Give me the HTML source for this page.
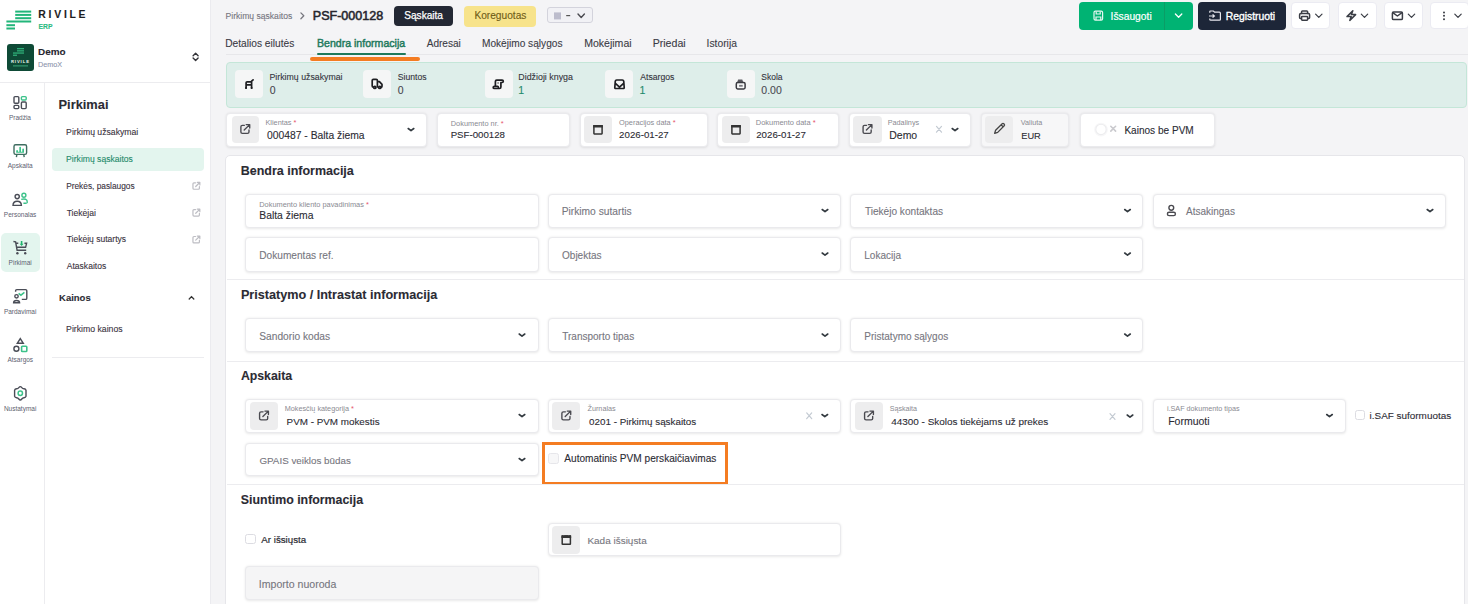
<!DOCTYPE html>
<html><head><meta charset="utf-8"><style>
*{box-sizing:border-box;margin:0;padding:0}
html,body{width:1468px;height:604px;overflow:hidden;background:#f4f4f6;font-family:"Liberation Sans",sans-serif}
.a{position:absolute}
.t{position:absolute;white-space:nowrap;line-height:1;-webkit-text-stroke:0.1px currentColor}
svg{display:block}
.card{position:absolute;background:#fff;border:1px solid #eaeaed;border-radius:4px;box-shadow:0 0.8px 2.5px rgba(0,0,0,0.09)}
.ibox{position:absolute;background:#ededee;border-radius:4px}
.hbtn{position:absolute;top:2px;width:39px;height:27px;background:#fff;border:1px solid #ebebf2;border-radius:4px}
.sbox{position:absolute;top:70px;width:28px;height:28px;background:#f5f6f6;border-radius:4px}
.cb{position:absolute;width:11px;height:11px;border:1px solid #dcdce2;border-radius:2.5px;background:#fff}
</style></head><body>
<div class="a" style="left:0px;top:0px;width:211px;height:604px;background:#fff;border-right:1px solid #ebebef"></div>
<div class="a" style="left:0px;top:82px;width:211px;height:1px;background:#ececef;"></div>
<div class="a" style="left:44px;top:83px;width:1px;height:521px;background:#ececef;"></div>
<svg class="a" style="left:0;top:0" width="40" height="34" viewBox="0 0 40 34"><g fill="#22b67a">
<rect x="15.2" y="10.6" width="16" height="2"/><rect x="15.2" y="13.9" width="16" height="2"/><rect x="15.2" y="17.2" width="16" height="2"/>
<rect x="6.4" y="20.5" width="24.8" height="2"/><rect x="6.4" y="24.2" width="8.6" height="2"/><rect x="6.4" y="27.5" width="8.6" height="2"/></g></svg>
<div class="t" style="left:38.32px;top:9.71px;font-size:10.40px;font-weight:bold;letter-spacing:2.75px;color:#1d1d22;">RIVILE</div>
<div class="t" style="left:38.56px;top:24.37px;font-size:6.79px;font-weight:bold;color:#2dbb83;">ERP</div>
<div class="a" style="left:7px;top:44.4px;width:26.5px;height:26.5px;background:#0e4a36;border-radius:3px"></div>
<svg class="a" style="left:7px;top:44.4px" width="27" height="27" viewBox="0 0 27 27"><g fill="#2fae78">
<rect x="10" y="4" width="7" height="1.3"/><rect x="10" y="6.2" width="7" height="1.3"/><rect x="6" y="8.4" width="11" height="1.3"/><rect x="6" y="10.6" width="4" height="1.3"/></g>
<text x="13.4" y="19.4" font-family="Liberation Sans" font-weight="bold" font-size="4.2" letter-spacing="0.9" fill="#e9f3ee" text-anchor="middle">RIVILE</text>
<rect x="6" y="21.4" width="15" height="1" fill="#3aa87a"/></svg>
<div class="t" style="left:38.05px;top:47.00px;font-size:9.94px;font-weight:bold;color:#26262e;">Demo</div>
<div class="t" style="left:38.12px;top:60.69px;font-size:7.23px;color:#8a92ab;">DemoX</div>
<div class="a" style="left:1.2px;top:233.4px;width:38.7px;height:38.2px;background:#e3f5ee;border-radius:5px"></div>
<div class="t" style="left:8.91px;top:115.01px;font-size:6.50px;color:#5d6170;-webkit-text-stroke:0">Pradžia</div>
<div class="t" style="left:7.73px;top:162.58px;font-size:6.50px;color:#5d6170;-webkit-text-stroke:0">Apskaita</div>
<div class="t" style="left:3.80px;top:212.15px;font-size:6.50px;color:#5d6170;-webkit-text-stroke:0">Personalas</div>
<div class="t" style="left:8.61px;top:259.72px;font-size:6.50px;color:#5d6170;-webkit-text-stroke:0">Pirkimai</div>
<div class="t" style="left:3.90px;top:309.29px;font-size:6.50px;color:#5d6170;-webkit-text-stroke:0">Pardavimai</div>
<div class="t" style="left:7.48px;top:356.86px;font-size:6.50px;color:#5d6170;-webkit-text-stroke:0">Atsargos</div>
<div class="t" style="left:3.90px;top:406.43px;font-size:6.50px;color:#5d6170;-webkit-text-stroke:0">Nustatymai</div>
<div class="t" style="left:58.57px;top:98.95px;font-size:12.84px;font-weight:bold;color:#2b2b33;">Pirkimai</div>
<div class="a" style="left:52px;top:147.5px;width:152.2px;height:23.2px;background:#e3f5ee;border-radius:4px"></div>
<div class="t" style="left:66.11px;top:127.77px;font-size:8.67px;color:#3a3340;">Pirkimų užsakymai</div>
<div class="t" style="left:66.11px;top:154.95px;font-size:8.58px;color:#1f8a6a;">Pirkimų sąskaitos</div>
<div class="t" style="left:66.13px;top:181.86px;font-size:8.33px;color:#3a3340;">Prekės, paslaugos</div>
<div class="t" style="left:66.63px;top:209.25px;font-size:8.58px;color:#3a3340;">Tiekėjai</div>
<div class="t" style="left:66.63px;top:234.99px;font-size:8.54px;color:#3a3340;">Tiekėjų sutartys</div>
<div class="t" style="left:66.80px;top:261.68px;font-size:8.54px;color:#3a3340;">Ataskaitos</div>
<div class="t" style="left:59.08px;top:293.19px;font-size:9.47px;font-weight:bold;color:#2b2b33;">Kainos</div>
<div class="t" style="left:66.10px;top:324.54px;font-size:8.70px;color:#3a3340;">Pirkimo kainos</div>
<div class="a" style="left:52px;top:356.5px;width:152px;height:1px;background:#ececef;"></div>
<div class="t" style="left:225.51px;top:12.05px;font-size:8.58px;color:#74747e;">Pirkimų sąskaitos</div>
<div class="t" style="left:312.79px;top:10.38px;font-size:12.56px;color:#26262e;-webkit-text-stroke:0.55px #26262e">PSF-000128</div>
<div class="a" style="left:394px;top:6px;width:59px;height:20px;background:#232834;border-radius:4px"></div>
<div class="t" style="left:404.25px;top:10.77px;font-size:10.10px;color:#fff;-webkit-text-stroke:0.25px #fff">Sąskaita</div>
<div class="a" style="left:464.3px;top:6px;width:72.2px;height:20.5px;background:#f7e38b;border-radius:4px"></div>
<div class="t" style="left:474.39px;top:10.70px;font-size:10.18px;color:#6e5b16;">Koreguotas</div>
<div class="a" style="left:547.4px;top:7.2px;width:46px;height:16.2px;border:1px solid #d3d3dc;border-radius:3px;background:#f1f1f5"></div>
<div class="t" style="left:225.18px;top:38.98px;font-size:10.20px;color:#3b3b45;">Detalios eilutės</div>
<div class="t" style="left:316.95px;top:37.65px;font-size:10.59px;color:#1f7a5c;-webkit-text-stroke:0.45px #1f7a5c">Bendra informacija</div>
<div class="t" style="left:426.70px;top:39.08px;font-size:10.08px;color:#3b3b45;">Adresai</div>
<div class="t" style="left:481.99px;top:39.02px;font-size:10.15px;color:#3b3b45;">Mokėjimo sąlygos</div>
<div class="t" style="left:584.15px;top:37.67px;font-size:10.56px;color:#3b3b45;">Mokėjimai</div>
<div class="t" style="left:652.65px;top:37.62px;font-size:10.62px;color:#3b3b45;">Priedai</div>
<div class="t" style="left:706.57px;top:38.88px;font-size:10.32px;color:#3b3b45;">Istorija</div>
<div class="a" style="left:226px;top:54px;width:1242px;height:1px;background:#e7e7ea;"></div>
<div class="a" style="left:317px;top:53px;width:89px;height:2px;background:#1f7a5c;border-radius:1px"></div>
<div class="a" style="left:310px;top:56.8px;width:110px;height:4px;background:#f47c22;border-radius:2px"></div>
<div class="a" style="left:1078.7px;top:1.5px;width:114px;height:28.2px;background:#00b373;border-radius:4px"></div>
<div class="a" style="left:1164px;top:1.5px;width:1px;height:28.2px;background:#0b9d66;"></div>
<div class="t" style="left:1110.58px;top:12.02px;font-size:10.27px;color:#fff;-webkit-text-stroke:0.2px #fff">Išsaugoti</div>
<div class="a" style="left:1197.7px;top:1.5px;width:88px;height:28.2px;background:#1d2638;border-radius:4px"></div>
<div class="t" style="left:1225.77px;top:11.96px;font-size:10.34px;color:#fff;-webkit-text-stroke:0.35px #fff">Registruoti</div>
<div class="hbtn" style="left:1291px"></div>
<div class="hbtn" style="left:1337.6px"></div>
<div class="hbtn" style="left:1383.6px"></div>
<div class="hbtn" style="left:1430.2px"></div>
<div class="a" style="left:225.5px;top:62px;width:1241px;height:46px;background:#deeeea;border:1px solid #c4e6d8;border-radius:4px"></div>
<div class="sbox" style="left:235.3px"></div>
<div class="t" style="left:269.50px;top:73.39px;font-size:8.77px;color:#34343c;">Pirkimų užsakymai</div>
<div class="t" style="left:269.81px;top:84.63px;font-size:10.50px;color:#44444c;">0</div>
<div class="sbox" style="left:363px"></div>
<div class="t" style="left:397.71px;top:73.48px;font-size:8.66px;color:#34343c;">Siuntos</div>
<div class="t" style="left:397.71px;top:84.63px;font-size:10.50px;color:#44444c;">0</div>
<div class="sbox" style="left:484.6px"></div>
<div class="t" style="left:518.29px;top:73.31px;font-size:8.87px;color:#34343c;">Didžioji knyga</div>
<div class="t" style="left:518.21px;top:84.63px;font-size:10.50px;color:#1f8a6a;">1</div>
<div class="sbox" style="left:605px"></div>
<div class="t" style="left:640.20px;top:73.46px;font-size:8.69px;color:#34343c;">Atsargos</div>
<div class="t" style="left:639.41px;top:84.63px;font-size:10.50px;color:#1f8a6a;">1</div>
<div class="sbox" style="left:726.7px"></div>
<div class="t" style="left:761.32px;top:72.61px;font-size:8.50px;color:#34343c;">Skola</div>
<div class="t" style="left:761.31px;top:84.63px;font-size:10.50px;color:#4a4a52;">0.00</div>
<div class="card" style="left:226px;top:112.8px;width:201.2px;height:34px"></div>
<div class="ibox" style="left:231.6px;top:115.6px;width:27.7px;height:27.7px"></div>
<div class="t" style="left:265.41px;top:118.99px;font-size:7.35px;color:#8a8a92;-webkit-text-stroke:0">Klientas <span style="color:#e5546b">*</span></div>
<div class="t" style="left:267.01px;top:131.17px;font-size:10.33px;color:#2b2b33;">000487 - Balta žiema</div>
<div class="card" style="left:437px;top:112.8px;width:133.2px;height:34px"></div>
<div class="t" style="left:450.81px;top:120.26px;font-size:7.39px;color:#8a8a92;-webkit-text-stroke:0">Dokumento nr. <span style="color:#e5546b">*</span></div>
<div class="t" style="left:450.63px;top:129.82px;font-size:9.69px;color:#2b2b33;">PSF-000128</div>
<div class="card" style="left:580.1px;top:112.9px;width:127.5px;height:34px"></div>
<div class="ibox" style="left:584px;top:115.6px;width:28.2px;height:27.7px"></div>
<div class="t" style="left:618.97px;top:119.15px;font-size:7.40px;color:#8a8a92;-webkit-text-stroke:0">Operacijos data <span style="color:#e5546b">*</span></div>
<div class="t" style="left:619.11px;top:129.80px;font-size:9.71px;color:#2b2b33;">2026-01-27</div>
<div class="card" style="left:717.3px;top:112.9px;width:122px;height:34px"></div>
<div class="ibox" style="left:722.2px;top:115.6px;width:27.7px;height:27.7px"></div>
<div class="t" style="left:755.80px;top:119.08px;font-size:7.48px;color:#8a8a92;-webkit-text-stroke:0">Dokumento data <span style="color:#e5546b">*</span></div>
<div class="t" style="left:756.21px;top:129.78px;font-size:9.73px;color:#2b2b33;">2026-01-27</div>
<div class="card" style="left:848.8px;top:113px;width:122.2px;height:33.7px"></div>
<div class="ibox" style="left:853.3px;top:115.6px;width:28.4px;height:27.7px"></div>
<div class="t" style="left:887.72px;top:119.07px;font-size:7.25px;color:#8a8a92;-webkit-text-stroke:0">Padalinys</div>
<div class="t" style="left:889.26px;top:130.74px;font-size:10.48px;color:#2b2b33;">Demo</div>
<div class="card" style="left:980.8px;top:113px;width:88.5px;height:33.7px;background:#f7f7f8"></div>
<div class="ibox" style="left:985.3px;top:115.6px;width:27.4px;height:27.7px"></div>
<div class="t" style="left:1020.78px;top:119.31px;font-size:7.21px;color:#8a8a92;-webkit-text-stroke:0">Valiuta</div>
<div class="t" style="left:1021.26px;top:131.78px;font-size:9.26px;color:#2b2b33;">EUR</div>
<div class="card" style="left:1079.6px;top:113px;width:135px;height:33.7px"></div>
<div class="t" style="left:1124.39px;top:126.39px;font-size:10.07px;color:#2b2b33;">Kainos be PVM</div>
<div class="a" style="left:225.3px;top:155px;width:1239.7px;height:470px;background:#fff;border:1px solid #e6e6ea;border-radius:5px"></div>
<div class="t" style="left:240.69px;top:165.25px;font-size:12.49px;font-weight:bold;color:#2b2b33;">Bendra informacija</div>
<div class="card" style="left:245.3px;top:193.8px;width:293.6px;height:34.6px"></div>
<div class="card" style="left:547.6px;top:193.8px;width:293.6px;height:34.6px"></div>
<div class="card" style="left:849.9px;top:193.8px;width:293.6px;height:34.6px"></div>
<div class="card" style="left:1152.9px;top:193.8px;width:293.3px;height:34.6px"></div>
<div class="t" style="left:259.31px;top:201.36px;font-size:7.38px;color:#8a8a92;-webkit-text-stroke:0">Dokumento kliento pavadinimas <span style="color:#e5546b">*</span></div>
<div class="t" style="left:259.27px;top:210.55px;font-size:10.36px;color:#2b2b33;">Balta žiema</div>
<div class="t" style="left:561.68px;top:206.65px;font-size:10.24px;color:#76767e;">Pirkimo sutartis</div>
<div class="t" style="left:864.90px;top:206.76px;font-size:10.10px;color:#76767e;">Tiekėjo kontaktas</div>
<div class="t" style="left:1186.00px;top:206.85px;font-size:10.00px;color:#76767e;">Atsakingas</div>
<div class="card" style="left:245.3px;top:237.2px;width:293.6px;height:34.4px"></div>
<div class="card" style="left:547.6px;top:237.2px;width:293.6px;height:34.4px"></div>
<div class="card" style="left:849.9px;top:237.2px;width:293.6px;height:34.4px"></div>
<div class="t" style="left:259.29px;top:251.14px;font-size:10.13px;color:#76767e;">Dokumentas ref.</div>
<div class="t" style="left:562.05px;top:251.25px;font-size:10.00px;color:#76767e;">Objektas</div>
<div class="t" style="left:864.30px;top:251.25px;font-size:10.00px;color:#76767e;">Lokacija</div>
<div class="a" style="left:227px;top:279px;width:1237px;height:1px;background:#ececef;"></div>
<div class="t" style="left:240.88px;top:288.52px;font-size:12.64px;font-weight:bold;color:#2b2b33;">Pristatymo / Intrastat informacija</div>
<div class="card" style="left:245.3px;top:317.9px;width:293.6px;height:34.2px"></div>
<div class="card" style="left:547.6px;top:317.9px;width:293.6px;height:34.2px"></div>
<div class="card" style="left:849.9px;top:317.9px;width:293.6px;height:34.2px"></div>
<div class="t" style="left:259.34px;top:331.98px;font-size:10.20px;color:#76767e;">Sandorio kodas</div>
<div class="t" style="left:562.30px;top:332.15px;font-size:10.00px;color:#76767e;">Transporto tipas</div>
<div class="t" style="left:864.30px;top:332.15px;font-size:10.00px;color:#76767e;">Pristatymo sąlygos</div>
<div class="a" style="left:227px;top:360.5px;width:1237px;height:1px;background:#ececef;"></div>
<div class="t" style="left:240.89px;top:370.20px;font-size:12.31px;font-weight:bold;color:#2b2b33;">Apskaita</div>
<div class="card" style="left:245.3px;top:398.6px;width:293.6px;height:34px"></div>
<div class="ibox" style="left:250.1px;top:402px;width:27.6px;height:28px"></div>
<div class="t" style="left:284.72px;top:405.05px;font-size:7.28px;color:#8a8a92;-webkit-text-stroke:0">Mokesčių kategorija <span style="color:#e5546b">*</span></div>
<div class="t" style="left:286.61px;top:416.58px;font-size:9.85px;color:#2b2b33;">PVM - PVM mokestis</div>
<div class="card" style="left:547.6px;top:398.6px;width:293.6px;height:34px"></div>
<div class="ibox" style="left:552.3px;top:402px;width:28px;height:28px"></div>
<div class="t" style="left:587.48px;top:405.06px;font-size:7.27px;color:#8a8a92;-webkit-text-stroke:0">Žurnalas</div>
<div class="t" style="left:589.03px;top:416.57px;font-size:9.85px;color:#2b2b33;">0201 - Pirkimų sąskaitos</div>
<div class="card" style="left:849.9px;top:398.6px;width:293.6px;height:34px"></div>
<div class="ibox" style="left:855px;top:402px;width:28px;height:28px"></div>
<div class="t" style="left:889.78px;top:405.98px;font-size:7.12px;color:#8a8a92;-webkit-text-stroke:0">Sąskaita</div>
<div class="t" style="left:891.18px;top:416.69px;font-size:9.96px;color:#2b2b33;">44300 - Skolos tiekėjams už prekes</div>
<div class="card" style="left:1152.9px;top:398.6px;width:192.8px;height:34px"></div>
<div class="t" style="left:1166.93px;top:405.10px;font-size:7.22px;color:#8a8a92;-webkit-text-stroke:0">i.SAF dokumento tipas</div>
<div class="t" style="left:1168.16px;top:416.02px;font-size:10.51px;color:#2b2b33;">Formuoti</div>
<div class="cb" style="left:1354.5px;top:410px;width:10px;height:10px"></div>
<div class="t" style="left:1369.55px;top:411.21px;font-size:9.93px;color:#2b2b33;">i.SAF suformuotas</div>
<div class="card" style="left:245.3px;top:443px;width:293.6px;height:33.1px"></div>
<div class="t" style="left:259.41px;top:456.20px;font-size:9.82px;color:#76767e;">GPAIS veiklos būdas</div>
<div class="cb" style="left:547.7px;top:452.7px;width:11.3px;height:11.7px;border-color:#e6e6ea;background:#f7f7f8"></div>
<div class="t" style="left:564.30px;top:454.37px;font-size:10.10px;color:#2b2b33;">Automatinis PVM perskaičiavimas</div>
<div class="a" style="left:541.7px;top:442.4px;width:186.7px;height:42.2px;border:3px solid #f47c22"></div>
<div class="a" style="left:227px;top:484.1px;width:1237px;height:1px;background:#ececef;"></div>
<div class="t" style="left:240.86px;top:494.15px;font-size:12.37px;font-weight:bold;color:#2b2b33;">Siuntimo informacija</div>
<div class="cb" style="left:245.4px;top:534px;width:10.7px;height:10.3px"></div>
<div class="t" style="left:261.30px;top:535.48px;font-size:9.73px;color:#2b2b33;-webkit-text-stroke:0.2px #2b2b33">Ar išsiųsta</div>
<div class="card" style="left:547.6px;top:522.9px;width:293.6px;height:33.6px"></div>
<div class="ibox" style="left:552.3px;top:526.4px;width:28px;height:27.3px"></div>
<div class="t" style="left:587.40px;top:535.56px;font-size:9.98px;color:#76767e;">Kada išsiųsta</div>
<div class="card" style="left:245.3px;top:566.2px;width:293.6px;height:33.8px;background:#f5f5f6"></div>
<div class="t" style="left:258.85px;top:578.87px;font-size:10.57px;color:#76767e;">Importo nuoroda</div>
<svg class="a" style="left:0;top:0;z-index:5;pointer-events:none" width="1468" height="604" viewBox="0 0 1468 604">
<defs>
  <path id="chev" d="M-2.8 -1 L0 1.2 L2.8 -1" fill="none" stroke="#333a40" stroke-width="1.6" stroke-linecap="round" stroke-linejoin="round"/>
  <path id="chevs" d="M-3.2 -1.7 L0 1.5 L3.2 -1.7" fill="none" stroke="#3a3d45" stroke-width="1.2" stroke-linecap="round" stroke-linejoin="round"/>
  <path id="x" d="M-2.5 -2.9 L2.5 2.9 M2.5 -2.9 L-2.5 2.9" fill="none" stroke="#c3cad2" stroke-width="1.2" stroke-linecap="round"/>
  <g id="ext" transform="scale(0.92)">
    <path d="M-1 -4 H-3.2 Q-4.8 -4 -4.8 -2.4 V3.2 Q-4.8 4.8 -3.2 4.8 H2.4 Q4 4.8 4 3.2 V1" fill="none" stroke="#4a4a50" stroke-width="1.5" stroke-linecap="round"/>
    <path d="M-1.2 1.2 L4.2 -4.2 M1 -4.8 H4.8 V-1" fill="none" stroke="#4a4a50" stroke-width="1.5" stroke-linecap="round" stroke-linejoin="round"/>
  </g>
  <g id="cal">
    <rect x="-4.1" y="-3.9" width="8.2" height="8.25" rx="0.4" fill="none" stroke="#333" stroke-width="1.5"/>
    <path d="M-4.85 -4.7 H-3.3 L-2.5 -4.1 L-1.7 -4.7 H1.7 L2.5 -4.1 L3.3 -4.7 H4.85 V-2 H-4.85 Z" fill="#333"/>
  </g>
  <g id="extsm" transform="scale(0.86)">
    <path d="M-1 -3.5 H-2.8 Q-4 -3.5 -4 -2.3 V2.8 Q-4 4 -2.8 4 H2.3 Q3.5 4 3.5 2.8 V1" fill="none" stroke="#bdbdc3" stroke-width="1.4" stroke-linecap="round"/>
    <path d="M-0.8 0.8 L3.8 -3.8 M1 -4 H4 V-1" fill="none" stroke="#bdbdc3" stroke-width="1.4" stroke-linecap="round" stroke-linejoin="round"/>
  </g>
</defs>

<!-- sidebar rail icons -->
<g fill="none" stroke="#4a4d57" stroke-width="1.4">
  <!-- Pradzia -->
  <rect x="14" y="96.6" width="4.8" height="6.6" rx="1"/>
  <rect x="14" y="105.4" width="4.8" height="3.2" rx="1"/>
  <rect x="21.4" y="102" width="4.8" height="6.6" rx="1"/>
  <rect x="21.4" y="96.6" width="4.8" height="3.4" rx="1" stroke="#3cc28a"/>
  <!-- Apskaita -->
  <rect x="14" y="144.8" width="12.6" height="9.6" rx="1.6" stroke="#3f6d60"/>
  <path d="M16.8 154.6 L16.4 157.2 M23.8 154.6 L24.2 157.2" stroke="#3f6d60"/>
  <!-- Personalas -->
  <circle cx="17.2" cy="196.6" r="2.1"/>
  <path d="M13 205.4 Q13 201.2 17.2 201.2 Q21.4 201.2 21.4 205.4 Z"/>
  <circle cx="23.9" cy="195.3" r="2" stroke="#3cc28a"/>
  <path d="M21.2 199.4 Q23.5 198.8 25.5 199.2 Q27.5 200 27.3 202.4 Q27 203.3 25.2 203.2 L23.4 203.2" stroke="#3cc28a"/>
  <!-- Pirkimai cart -->
  <path d="M13.4 241.5 L15.6 241.8 L17.1 250.2 L26.2 250.2 M16.3 247.3 L25.6 247.3 L26.6 243.3 L24.4 243.3 M18.3 243.3 L16.2 243.3"/>
  <!-- Pardavimai -->
  <path d="M15.6 291.8 V290.8 Q15.6 289.6 16.8 289.6 H25.6 Q26.8 289.6 26.8 290.8 V298.2 Q26.8 299.4 25.6 299.4 H21.8"/>
  <circle cx="16.5" cy="296.3" r="1.7"/>
  <path d="M13.6 302.8 Q13.6 300.5 16.5 300.5 Q19.6 300.5 19.6 302.8 Z"/>
  <path d="M18.6 293.4 L20.9 295.2 L24.4 292.4" stroke="#3cc28a" stroke-width="1.5"/>
  <!-- Atsargos -->
  <path d="M20.3 338.6 L23.3 343.3 L17.3 343.3 Z"/>
  <circle cx="16.4" cy="348.7" r="2.5"/>
  <rect x="21.6" y="346.3" width="5.2" height="5.2" rx="0.8" stroke="#3cc28a" stroke-width="1.6"/>
  <!-- Nustatymai gear (hexagon-ish) -->
  <path d="M20.3 386.6 Q21 386.6 21.8 387.6 Q22.6 388.6 24 388.8 Q25.6 389 26 390.2 V396.4 Q25.6 397.6 24 397.8 Q22.6 398 21.8 399 Q21 400 20.3 400 Q19.6 400 18.8 399 Q18 398 16.6 397.8 Q15 397.6 14.6 396.4 V390.2 Q15 389 16.6 388.8 Q18 388.6 18.8 387.6 Q19.6 386.6 20.3 386.6 Z"/>
  <circle cx="20.3" cy="393.3" r="2.2" stroke="#3cc28a" stroke-width="1.5"/>
</g>
<!-- Apskaita bars -->
<path d="M16.2 152.8 V151 Q16.2 150 17.1 150 Q18 150 18 151 V152.8 Z M19.3 152.8 V147.6 Q19.3 146.7 20.15 146.7 Q21 146.7 21 147.6 V152.8 Z M22.3 152.8 V149.3 Q22.3 148.4 23.15 148.4 Q24 148.4 24 149.3 V152.8 Z M16.2 151.8 H24 V152.8 H16.2 Z" fill="#3cc28a"/>
<!-- cart wheels & arrow -->
<circle cx="17.4" cy="253.2" r="1.2" fill="#4a4d57"/>
<circle cx="25.2" cy="253.2" r="1.2" fill="#4a4d57"/>
<path d="M21.6 241 V244.6" stroke="#22b46e" stroke-width="1.6"/>
<path d="M19.7 243.8 L21.6 246 L23.5 243.8 Z" fill="#22b46e"/>

<!-- workspace switch -->
<path d="M193.1 55.7 L195.6 53.3 L198.1 55.7 M193.1 58.1 L195.6 60.5 L198.1 58.1" fill="none" stroke="#333338" stroke-width="1.4" stroke-linecap="round" stroke-linejoin="round"/>
<!-- sidebar external & chevron up -->
<use href="#extsm" x="196.4" y="185.8"/>
<use href="#extsm" x="196.4" y="212.6"/>
<use href="#extsm" x="196.4" y="239.5"/>
<path d="M189.2 299 L191.5 296.6 L193.8 299" fill="none" stroke="#333" stroke-width="1.3" stroke-linecap="round"/>

<path d="M300.9 12.9 L303.8 15.8 L300.9 18.7" fill="none" stroke="#77777f" stroke-width="1.3" stroke-linecap="round" stroke-linejoin="round"/>
<!-- header dropdown -->
<rect x="554" y="12.4" width="7" height="7" fill="#bcbccc"/>
<rect x="566.2" y="15" width="4" height="1.2" fill="#555"/>
<path d="M578 14 L581.2 17.4 L584.4 14" fill="none" stroke="#4a4a50" stroke-width="1.4" stroke-linecap="round" stroke-linejoin="round"/>

<!-- header buttons icons -->
<g fill="none" stroke="#fff" stroke-width="1.2" opacity="0.9">
  <rect x="1094" y="11.2" width="8.6" height="9" rx="1.4"/>
  <path d="M1096.2 11.4 V14 H1100.2 V11.4 M1096 20 V17 H1100.8 V20"/>
</g>
<path d="M1175.4 14 L1178.6 17.2 L1181.8 14" fill="none" stroke="#fff" stroke-width="1.3" stroke-linecap="round" stroke-linejoin="round"/>
<g fill="none" stroke="#e8e8ee" stroke-width="1.2">
  <path d="M1209.8 12.8 V11.6 Q1209.8 11 1210.4 11 H1213.4 L1214.6 12.2 H1219.4 Q1220.4 12.2 1220.4 13.2 V19.4 Q1220.4 20.2 1219.4 20.2 H1210.8 Q1209.8 20.2 1209.8 19.4 V18.4"/>
  <path d="M1209 16 H1214.2 M1212.6 14.4 L1214.4 16 L1212.6 17.6"/>
</g>
<g fill="none" stroke="#3a3d45" stroke-width="1.5" stroke-linejoin="round" stroke-linecap="round">
  <!-- printer -->
  <path d="M1301.6 13.6 V11.8 Q1301.6 11 1302.4 11 H1306.8 Q1307.6 11 1307.6 11.8 V13.6"/>
  <path d="M1301.2 18.4 H1300.4 Q1299.6 18.4 1299.6 17.6 V14.8 Q1299.6 13.6 1300.8 13.6 H1308.4 Q1309.6 13.6 1309.6 14.8 V17.6 Q1309.6 18.4 1308.8 18.4 H1308"/>
  <rect x="1301.6" y="16.6" width="6" height="3.6" rx="0.6"/>
  <!-- bolt -->
  <path d="M1352.8 10.8 L1347 16.6 H1351.2 L1349.8 20.4 L1355.6 14.6 H1351.4 Z"/>
  <!-- mail -->
  <rect x="1392.4" y="12" width="10" height="7.6" rx="1.2"/>
  <path d="M1392.8 12.6 L1397.4 16 L1402 12.6"/>
</g>
<circle cx="1444" cy="12.4" r="1" fill="#3a3d45"/>
<circle cx="1444" cy="15.8" r="1" fill="#3a3d45"/>
<circle cx="1444" cy="19.2" r="1" fill="#3a3d45"/>
<use href="#chevs" x="1318.8" y="15.8"/>
<use href="#chevs" x="1364.5" y="15.8"/>
<use href="#chevs" x="1411.5" y="15.8"/>
<use href="#chevs" x="1458" y="15.8"/>

<!-- stats icons -->
<g fill="none" stroke="#1e1e22" stroke-width="1.7" stroke-linejoin="round" stroke-linecap="round">
  <!-- cart-ish chair -->
  <path d="M246.1 88 V82.8 Q246.1 81.8 247.1 81.8 H251.6 M251.6 88 V81.2 L253.1 79.8 M246.1 84.8 H251.6"/><circle cx="246" cy="88.1" r="1" fill="#1e1e22" stroke="none"/><circle cx="251.6" cy="88.1" r="1" fill="#1e1e22" stroke="none"/>
  <!-- truck -->
  <path d="M373.4 87.2 Q372.2 87.2 372.2 86 V80.6 Q372.2 79.4 373.4 79.4 H376.2 Q377.4 79.4 377.4 80.6 V87 M377.4 81.6 H379.4 L382 84.4 V86.2 Q382 87.2 381 87.2"/><circle cx="374.8" cy="87.4" r="1.1" fill="#f5f6f6"/><circle cx="379.8" cy="87.4" r="1.1" fill="#f5f6f6"/>
  <!-- scroll -->
  <path d="M495.4 86.4 V81.4 Q495.4 80.1 496.7 80.1 H502.1 Q503.3 80.1 503.3 81.3 Q503.3 82.5 502.1 82.5 H500.9 V87.1 Q500.9 88.5 499.5 88.5 H494.4 Q493.2 88.5 493.2 87.45 Q493.2 86.4 494.4 86.4 H497.6 Q498.4 86.4 498.4 87.4"/><circle cx="498.1" cy="83" r="0.9" fill="#888" stroke="none"/>
  <!-- inbox -->
  <path d="M616.6 80 H622.4 Q623.5 80 623.7 81.1 L624.2 87.5 Q624.3 88.5 623.3 88.5 H615.7 Q614.7 88.5 614.8 87.5 L615.3 81.1 Q615.5 80 616.6 80 Z M615.4 83.4 L619.5 87.2 L623.6 83.4"/>
  <!-- skola drawer -->
  <path d="M738.1 79.5 H742.3 L743.3 82.6 H737.1 Z" fill="#5a5a60" stroke="none"/><rect x="736.3" y="82.6" width="8.8" height="6.3" rx="1.4" stroke="#3a3a40" stroke-width="1.5"/><rect x="739.1" y="84.9" width="3.6" height="1.8" fill="#7a7a80" stroke="none"/>
</g>

<!-- top field icons -->
<use href="#ext" x="245.3" y="129"/>
<use href="#chev" x="411" y="129.5"/>
<use href="#cal" x="598" y="129.6"/>
<use href="#cal" x="736" y="129.6"/>
<use href="#ext" x="867.5" y="129"/>
<use href="#x" x="939" y="129.3"/>
<use href="#chev" x="955" y="129.5"/>
<path d="M1002.2 123.8 Q1003 123 1003.8 123.8 L1004.2 124.2 Q1005 125 1004.2 125.8 L997.7 132.4 L994.6 133.4 L995.6 130.3 Z M1001.2 124.9 L1003.1 126.8" fill="none" stroke="#444" stroke-width="1.3" stroke-linejoin="round"/>
<circle cx="1101" cy="129.6" r="6.2" fill="none" stroke="#f7f7f8" stroke-width="1.4"/>
<circle cx="1101" cy="129.4" r="5.2" fill="#fff" stroke="#ececee" stroke-width="1.1"/>
<path d="M1110.8 126.3 L1115.6 131.1 M1115.6 126.3 L1110.8 131.1" stroke="#cacace" stroke-width="1.6" stroke-linecap="round"/>

<!-- main card icons -->
<use href="#chev" x="825" y="210.5"/>
<use href="#chev" x="1127.5" y="210.5"/>
<use href="#chev" x="1430" y="210.5"/>
<circle cx="1171.3" cy="207.8" r="2.4" fill="none" stroke="#4a4a50" stroke-width="1.4"/>
<rect x="1167.4" y="212.2" width="8" height="3.4" rx="1.7" fill="none" stroke="#4a4a50" stroke-width="1.4"/>
<use href="#chev" x="825" y="254"/>
<use href="#chev" x="1127.5" y="254"/>
<use href="#chev" x="522" y="335"/>
<use href="#chev" x="825" y="335"/>
<use href="#chev" x="1127.5" y="335"/>
<use href="#ext" x="264" y="415.5"/>
<use href="#chev" x="522" y="415.5"/>
<use href="#ext" x="566.3" y="415.5"/>
<use href="#x" x="809.2" y="415.8"/>
<use href="#chev" x="824.8" y="415.5"/>
<use href="#ext" x="869" y="415.5"/>
<use href="#x" x="1112.5" y="416.5"/>
<use href="#chev" x="1130" y="416"/>
<use href="#chev" x="1329.5" y="415.5"/>
<use href="#chev" x="522" y="459.5"/>
<use href="#cal" x="566.3" y="540"/>
</svg>

</body></html>
